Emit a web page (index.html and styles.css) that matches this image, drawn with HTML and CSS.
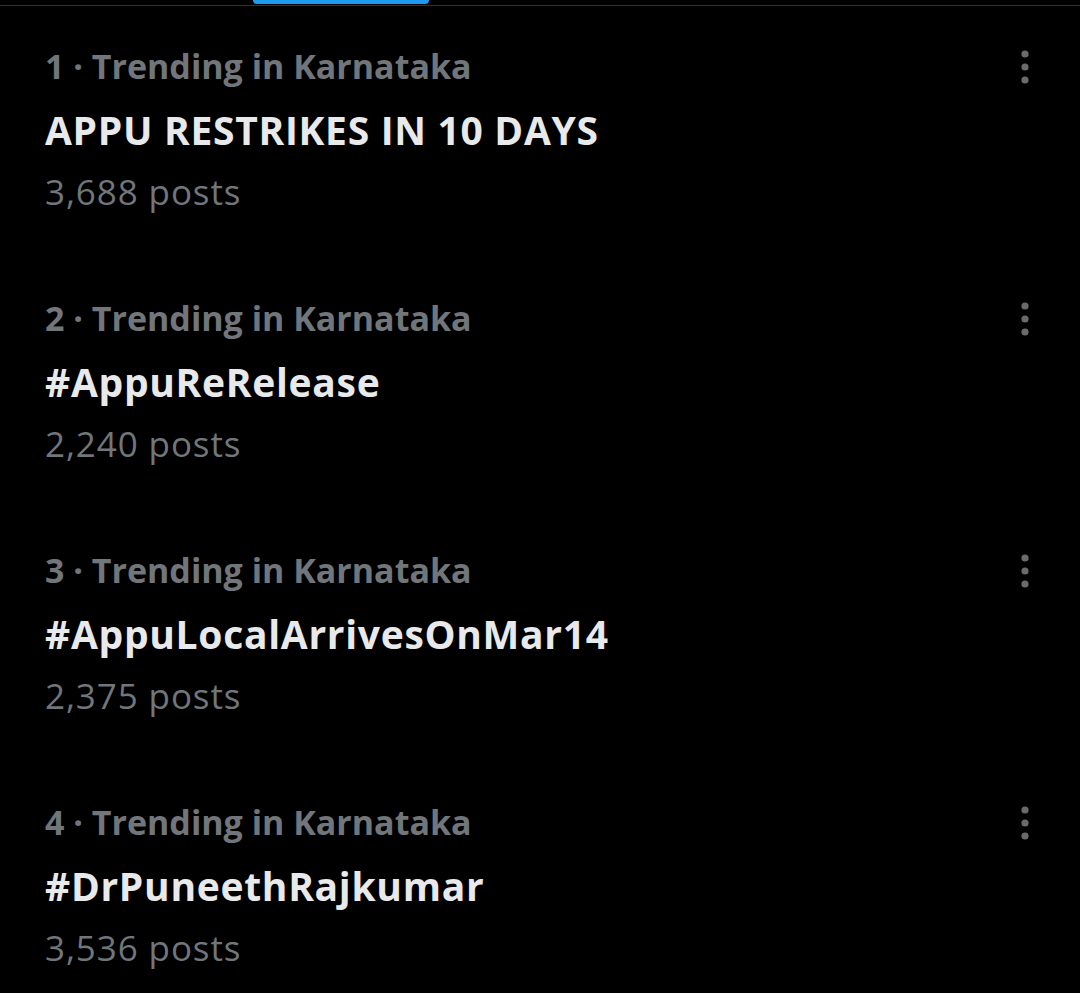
FILE: index.html
```html
<!DOCTYPE html>
<html lang="en">
<head>
<meta charset="utf-8">
<title>Trending</title>
<link rel="stylesheet" href="styles.css">
</head>
<body>
<div class="tabs">
  <div class="tab-indicator"></div>
</div>
<ul class="trends">
  <li class="trend">
    <div class="trend-head">
      <span class="trend-meta">1 · Trending in Karnataka</span>
      <svg class="more" viewBox="0 0 20 34" width="20" height="34" aria-hidden="true"><circle cx="10" cy="4" r="3.6"/><circle cx="10" cy="17" r="3.6"/><circle cx="10" cy="30" r="3.6"/></svg>
    </div>
    <div class="trend-title">APPU RESTRIKES IN 10 DAYS</div>
    <div class="trend-count">3,688 posts</div>
  </li>
  <li class="trend">
    <div class="trend-head">
      <span class="trend-meta">2 · Trending in Karnataka</span>
      <svg class="more" viewBox="0 0 20 34" width="20" height="34" aria-hidden="true"><circle cx="10" cy="4" r="3.6"/><circle cx="10" cy="17" r="3.6"/><circle cx="10" cy="30" r="3.6"/></svg>
    </div>
    <div class="trend-title">#AppuReRelease</div>
    <div class="trend-count">2,240 posts</div>
  </li>
  <li class="trend">
    <div class="trend-head">
      <span class="trend-meta">3 · Trending in Karnataka</span>
      <svg class="more" viewBox="0 0 20 34" width="20" height="34" aria-hidden="true"><circle cx="10" cy="4" r="3.6"/><circle cx="10" cy="17" r="3.6"/><circle cx="10" cy="30" r="3.6"/></svg>
    </div>
    <div class="trend-title">#AppuLocalArrivesOnMar14</div>
    <div class="trend-count">2,375 posts</div>
  </li>
  <li class="trend">
    <div class="trend-head">
      <span class="trend-meta">4 · Trending in Karnataka</span>
      <svg class="more" viewBox="0 0 20 34" width="20" height="34" aria-hidden="true"><circle cx="10" cy="4" r="3.6"/><circle cx="10" cy="17" r="3.6"/><circle cx="10" cy="30" r="3.6"/></svg>
    </div>
    <div class="trend-title">#DrPuneethRajkumar</div>
    <div class="trend-count">3,536 posts</div>
  </li>
</ul>
</body>
</html>
```
FILE: styles.css
```css
html, body {
  margin: 0;
  padding: 0;
  background: #000;
}
body {
  width: 1080px;
  height: 993px;
  overflow: hidden;
  font-family: "Open Sans", "Liberation Sans", sans-serif;
}
.tabs {
  height: 5px;
  border-bottom: 1px solid #2f3336;
  padding-left: 253px;
}
.tab-indicator {
  width: 176px;
  height: 4px;
  background: #1d9bf0;
  border-radius: 0 0 4px 4px;
}
.trends {
  list-style: none;
  margin: 0;
  padding: 0;
}
.trend {
  height: 252px;
  box-sizing: border-box;
  padding: 29px 45px 37px 45px;
}
.trend-head {
  display: flex;
  align-items: center;
  justify-content: space-between;
  height: 62px;
}
.trend-meta {
  font-size: 34px;
  font-weight: 700;
  color: #71767b;
  line-height: 62px;
}
.more {
  fill: #6b6b6b;
  margin-top: 2px;
}
.trend-title {
  font-size: 39px;
  font-weight: 700;
  letter-spacing: 0.7px;
  color: #e7e9ea;
  line-height: 66px;
}
.trend-count {
  font-size: 35px;
  font-weight: 400;
  letter-spacing: 0.9px;
  color: #71767b;
  line-height: 58px;
}
```
